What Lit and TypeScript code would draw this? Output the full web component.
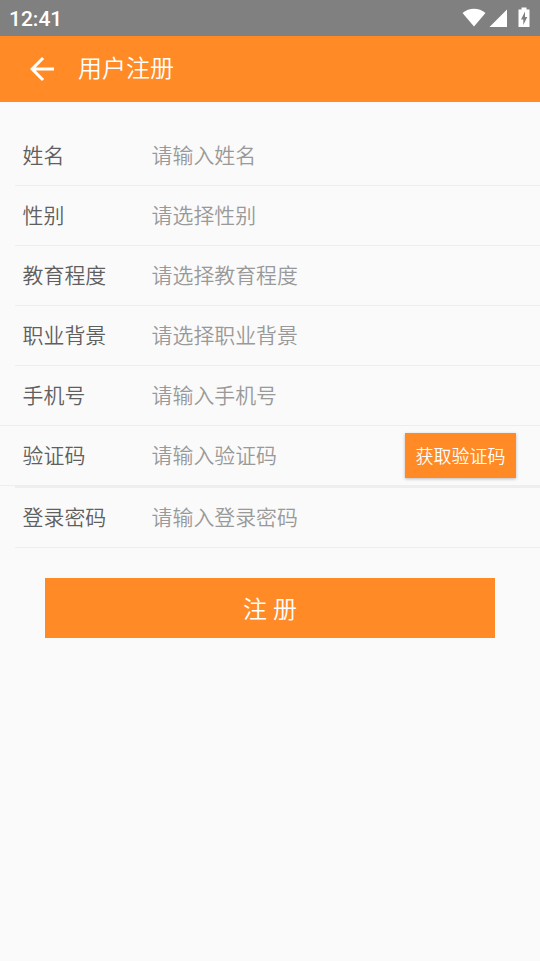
import { LitElement, html, css } from "lit";
import { customElement } from "lit/decorators.js";

interface Field { label: string; hint: string; code?: boolean }

const fields: Field[] = [
  { label: "姓名", hint: "请输入姓名" },
  { label: "性别", hint: "请选择性别" },
  { label: "教育程度", hint: "请选择教育程度" },
  { label: "职业背景", hint: "请选择职业背景" },
  { label: "手机号", hint: "请输入手机号" },
  { label: "验证码", hint: "请输入验证码", code: true },
  { label: "登录密码", hint: "请输入登录密码" },
];

@customElement("app-root")
export class AppRoot extends LitElement {
  static styles = css`
    :host { display: block; min-height: 961px; background: #fafafa; font-family: Roboto, "Noto Sans CJK SC", sans-serif; font-weight: 350; }
    * { box-sizing: border-box; }
    .status { height: 36px; background: #808080; color: #fff; display: flex; align-items: center; padding: 0 8px 0 9px; font-size: 21px; font-weight: 500; }
    .time { flex: 1; padding-top: 2px; }
    .status svg { display: block; }
    .bar { height: 66px; background: #ff8a26; color: #fff; display: flex; align-items: center; padding-left: 24px; font-size: 24px; }
    .title { margin-left: 18px; line-height: 36px; }
    .form { padding-top: 24px; }
    .row { height: 60px; margin-left: 15px; padding: 0 0 0 7.6px; display: flex; align-items: center; border-bottom: 1px solid #eeeeee; font-size: 20.9px; line-height: 30px; }
    .label { width: 129px; color: #5f5f5f; }
    .hint { flex: 1; color: #999; }
    .row.code { height: 61px; margin: -1px 0 0; padding: 0 24px 0 22.6px; border-top: 1px solid #eeeeee; }
    .rule { height: 2px; margin-left: 15px; background: #eeeeee; }
    .get { width: 111px; height: 45px; background: #ff8a26; color: #fff; font-size: 18px; display: flex; align-items: center; justify-content: center; box-shadow: 0 1px 3px rgba(0,0,0,.25); padding-top: 2px; }
    .submit { margin: 30px 45px 0; height: 60px; background: #ff8a26; color: #fff; font-size: 24px; line-height: 64px; text-align: center; }
  `;

  render() {
    return html`
      <div class="status">
        <span class="time">12:41</span>
        <svg width="70" height="24" viewBox="462 6 70 24" fill="#fff">
          <path d="M462.500 13C469 7.300 479 7.300 485.500 13L474 26.500Z" />
          <path d="M507 9.500V27H489.500Z" />
          <path fill-rule="evenodd" d="M521.500 7.500h5v2h3v17.500h-11v-17.500h3zM525 11.500l-4 8h2.300v5.500l4-8h-2.300z" />
        </svg>
      </div>
      <div class="bar">
        <svg width="36" height="36" viewBox="0 0 24 24" fill="#fff"><path d="M20 11H7.830l5.590-5.590L12 4l-8 8 8 8 1.410-1.410L7.830 13H20z" /></svg>
        <span class="title">用户注册</span>
      </div>
      <div class="form">
        ${fields.map((f) => html`
          <div class="row ${f.code ? "code" : ""}">
            <span class="label">${f.label}</span>
            <span class="hint">${f.hint}</span>
            ${f.code ? html`<span class="get">获取验证码</span>` : ""}
          </div>
          ${f.code ? html`<div class="rule"></div>` : ""}`)}
      </div>
      <div class="submit">注 册</div>
    `;
  }
}
